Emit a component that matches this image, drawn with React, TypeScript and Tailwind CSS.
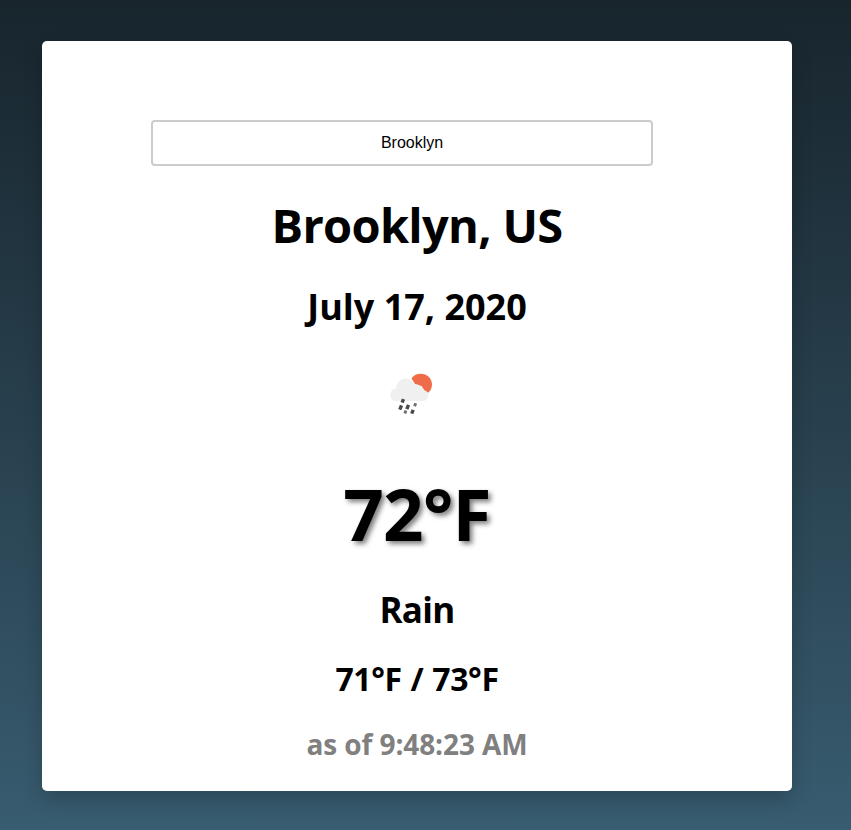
function RainIcon() {
  return (
    <svg viewBox="0 0 50 50" className="h-[50px] w-[50px]" aria-hidden="true">
      <path
        d="M24.500 9.500C26.300 6.500 29.500 4.700 33.500 4.700C40 4.700 45 9.300 45 15.300C45 18.900 43.700 21.800 41.300 23.800L37.500 21.500L34.500 17L28.500 15.800Z"
        fill="#ee6c48"
      />
      <path
        d="M9.200 32C5.700 32 3.200 29.300 3.200 25.900C3.200 22.300 5.800 19.600 9.300 19.500C9.300 13.900 13.100 9.400 18.500 9.400C22.600 9.400 25.700 12 27 15.500C31.200 14.600 34.900 17.300 35.600 21.200C38.900 20.900 41.300 23.300 41.300 26.400C41.300 29.700 38.900 32 35.600 32Z"
        fill="#f0f0f1"
      />
      <g fill="none" stroke="#4b4b4b" strokeWidth="3.4">
        <path d="M16.500 30.200l-1.400 3.500M14.500 36.400l-1.700 4.200M21.500 35.900l-1.700 4.200M26.200 40.900l-1.500 3.700" />
        <path d="M28.700 34.200l-1.100 3M18.900 41.500l-1.100 3" strokeWidth="2.900" stroke="#707070" />
      </g>
    </svg>
  );
}

export default function App() {
  return (
    <main className="flex h-[830px] w-[851px] items-start overflow-hidden bg-linear-to-b from-[#18252d] to-[#385c70] pt-[41px] pl-[42px]">
      <section className="flex h-[750px] w-[750px] flex-col items-center rounded-[5px] bg-white pt-[79px] font-['Open_Sans','Noto_Sans',sans-serif] font-bold text-black shadow-[0_8px_20px_rgba(0,0,0,0.2)]">
        <input
          type="text"
          defaultValue="Brooklyn"
          className="mr-[30px] h-[46px] w-[502px] rounded-[4px] border-2 border-[#ccc] bg-white pl-5 text-center font-['Liberation_Sans',sans-serif] text-base font-normal outline-none"
        />
        <h1 className="mt-[27px] text-[47px] leading-[64px] tracking-[-0.7px]">Brooklyn, US</h1>
        <h2 className="mt-[26px] text-[36px] leading-[48px]">July 17, 2020</h2>
        <div className="mt-[38px] mr-[10px]">
          <RainIcon />
        </div>
        <p className="mt-[47px] text-[71px] leading-[96px] tracking-[-0.8px] [text-shadow:3px_3px_5px_rgba(0,0,0,0.5)]">72°F</p>
        <h3 className="mt-6 text-[35px] leading-[48px] tracking-[-0.7px]">Rain</h3>
        <p className="mt-[23px] text-[32px] leading-[44px] tracking-[-0.4px] [word-spacing:1px]">71°F / 73°F</p>
        <p className="mt-[24px] text-[28px] leading-[38px] tracking-[-0.1px] text-[#808080]">as of 9:48:23 AM</p>
      </section>
    </main>
  );
}
